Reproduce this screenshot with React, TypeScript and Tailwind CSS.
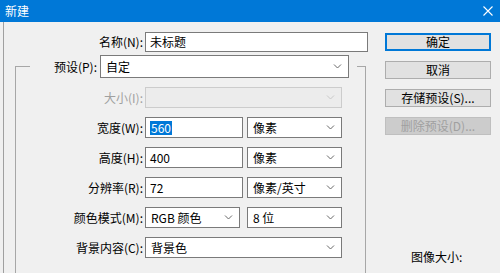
import React from 'react';

const font = { fontFamily: '"Microsoft YaHei UI", "Noto Sans CJK SC", sans-serif' };

function Chevron({ disabled }: { disabled?: boolean }) {
  return (
    <svg width="9" height="5" viewBox="0 0 9 5" className="shrink-0">
      <path
        d="M1 0.5 L4.5 4 L8 0.5"
        fill="none"
        stroke={disabled ? '#c8c8c8' : '#686868'}
        strokeWidth="1"
      />
    </svg>
  );
}

function Select({ value, w, h = 'h-[21px]', disabled }: { value: string; w: string; h?: string; disabled?: boolean }) {
  return (
    <div
      className={`${w} ${h} flex items-center justify-between pl-[5px] pr-[6px] border ${
        disabled ? 'border-[#cccccc] bg-[#ececec]' : 'border-[#7a7a7a] bg-white'
      }`}
    >
      <span className="leading-none">{value}</span>
      <Chevron disabled={disabled} />
    </div>
  );
}

function Input({ children, w }: { children: React.ReactNode; w: string }) {
  return (
    <div className={`${w} h-[21px] flex items-center pl-[4px] border border-[#7a7a7a] bg-white`}>
      {children}
    </div>
  );
}

function Row({ label, disabled, children }: { label: string; disabled?: boolean; children: React.ReactNode }) {
  return (
    <div className="flex items-center h-[21px]">
      <div className={`w-[113px] text-right leading-none ${disabled ? 'text-[#a0a0a0]' : ''}`}>{label}</div>
      <div className="ml-[2px] flex gap-[4px]">{children}</div>
    </div>
  );
}

function Button({ label, primary, disabled }: { label: string; primary?: boolean; disabled?: boolean }) {
  return (
    <div
      className={`w-[106px] h-[18px] flex items-center justify-center leading-none ${
        primary
          ? 'border-2 border-[#0078d7] bg-[#e1e1e1]'
          : disabled
          ? 'border border-[#bfbfbf] bg-[#cccccc] text-[#a0a0a0]'
          : 'border border-[#adadad] bg-[#e1e1e1]'
      }`}
    >
      {label}
    </div>
  );
}

export default function App() {
  return (
    <div className="w-[500px] h-[273px] overflow-hidden text-[12px] text-black bg-[#f0f0f0]" style={font}>
      {/* Title bar */}
      <div className="h-[22px] bg-[#0078d7] flex items-center justify-between pl-[5px] pr-[7px] text-white">
        <span className="leading-none">新建</span>
        <svg width="10" height="10" viewBox="0 0 10 10">
          <path d="M0.5 0.5 L9.5 9.5 M9.5 0.5 L0.5 9.5" stroke="#ffffff" strokeWidth="1.1" />
        </svg>
      </div>

      <div className="flex h-[251px]">
        <div className="ml-[3px] border-l border-[#a0a0a0] flex flex-1">
          {/* Left: form */}
          <div className="w-[364px] pt-[10px]">
            <div className="flex items-center h-[20px]">
              <div className="w-[139px] text-right leading-none">名称(N):</div>
              <div className="ml-[2px] w-[223px] h-[20px] flex items-center pl-[4px] border border-[#7a7a7a] bg-white">
                未标题
              </div>
            </div>

            <fieldset className="ml-[11px] mt-[3px] w-[351px] h-[260px] border border-[#a7a7a7] pl-[14px]">
              <legend className="flex items-center pr-[8px]">
                <div className="w-[67px] text-right leading-none">预设(P):</div>
                <div className="ml-[3px]">
                  <Select value="自定" w="w-[249px]" h="h-[23px]" />
                </div>
              </legend>

              <div className="mt-[9px] flex flex-col gap-[9px]">
                <Row label="大小(I):" disabled>
                  <Select value="" w="w-[197px]" disabled />
                </Row>
                <Row label="宽度(W):">
                  <Input w="w-[98px]">
                    <span className="bg-[#0078d7] text-white leading-[14px] px-[1px]">560</span>
                  </Input>
                  <Select value="像素" w="w-[95px]" />
                </Row>
                <Row label="高度(H):">
                  <Input w="w-[98px]">400</Input>
                  <Select value="像素" w="w-[95px]" />
                </Row>
                <Row label="分辨率(R):">
                  <Input w="w-[98px]">72</Input>
                  <Select value="像素/英寸" w="w-[95px]" />
                </Row>
                <Row label="颜色模式(M):">
                  <Select value="RGB 颜色" w="w-[95px]" />
                  <div className="ml-[3px]">
                    <Select value="8 位" w="w-[95px]" />
                  </div>
                </Row>
                <Row label="背景内容(C):">
                  <Select value="背景色" w="w-[197px]" />
                </Row>
              </div>
            </fieldset>
          </div>

          {/* Right: buttons */}
          <div className="ml-[17px] pt-[11px] pb-[8px] flex flex-col">
            <div className="flex flex-col gap-[10px]">
              <Button label="确定" primary />
              <Button label="取消" />
              <Button label="存储预设(S)..." />
              <Button label="删除预设(D)..." disabled />
            </div>
            <div className="mt-auto pl-[26px] leading-[16px]">图像大小:</div>
          </div>
        </div>
      </div>
    </div>
  );
}
